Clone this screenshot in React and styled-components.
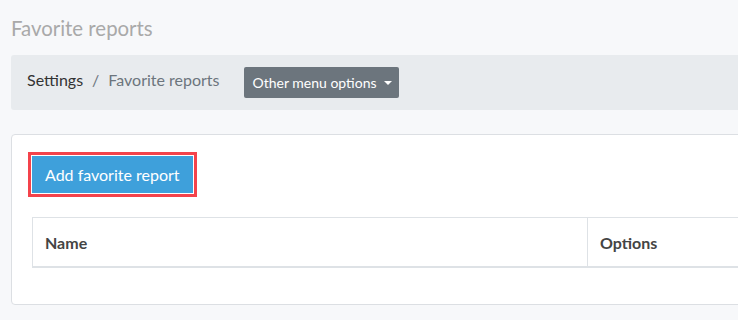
import React from 'react';
import styled, { createGlobalStyle } from 'styled-components';

const GlobalStyle = createGlobalStyle`
  body {
    margin: 0;
    background: #f7f8fa;
    font-family: Lato, "Open Sans", sans-serif;
    overflow: hidden;
  }
`;

const Page = styled.div`
  width: 1180px;
  padding: 0 0 0 11px;
`;

const Title = styled.h1`
  margin: 0;
  padding-top: 16px;
  height: 39px;
  font-size: 20.4px;
  font-weight: 400;
  line-height: 24px;
  color: #a9a9a9;
`;

const Breadcrumbs = styled.div`
  display: flex;
  align-items: center;
  height: 55px;
  padding: 0 16px;
  background: #e8ebee;
  border-radius: 3px;
`;

const Trail = styled.ol`
  display: flex;
  margin: 0 24px 6px 0;
  padding: 0;
  list-style: none;
  font-size: 16px;

  li + li::before {
    content: '/';
    padding: 0 9px;
    color: #6c757d;
  }
`;

const Crumb = styled.li`
  color: ${p => (p.$active ? '#6c757d' : '#333')};
`;

const MenuButton = styled.button`
  display: flex;
  align-items: center;
  gap: 7px;
  height: 31px;
  padding: 0 7px 0 9px;
  border: none;
  border-radius: 2px;
  background: #6c757d;
  color: #fff;
  font-family: inherit;
  font-size: 14px;
`;

const Caret = styled.span`
  width: 0;
  height: 0;
  border-left: 4px solid transparent;
  border-right: 4px solid transparent;
  border-top: 4px solid #fff;
  margin-top: 1px;
`;

const Card = styled.div`
  margin-top: 24px;
  padding: 21px 20px 36px;
  background: #fff;
  border: 1px solid #dcdfe3;
  border-radius: 4px;
`;

const AddButton = styled.button`
  display: block;
  height: 37px;
  padding: 0 13px;
  border: none;
  background: #3ea0db;
  color: #fff;
  font-family: inherit;
  font-size: 16px;
  box-shadow: 0 0 0 1px #fff, 0 0 0 4px #f4434b;
`;

const Table = styled.table`
  width: 100%;
  margin-top: 24px;
  border-collapse: collapse;
`;

const HeadCell = styled.th`
  width: ${p => p.$width || 'auto'};
  height: 48px;
  padding: 0 12px;
  text-align: left;
  font-size: 16px;
  font-weight: 700;
  color: #444;
  border: 1px solid #dee2e6;
  border-bottom: 2px solid #dee2e6;
`;

export default function App() {
  return (
    <Page>
      <GlobalStyle />
      <Title>Favorite reports</Title>
      <Breadcrumbs>
        <Trail>
          <Crumb>Settings</Crumb>
          <Crumb $active>Favorite reports</Crumb>
        </Trail>
        <MenuButton>
          Other menu options
          <Caret />
        </MenuButton>
      </Breadcrumbs>
      <Card>
        <AddButton>Add favorite report</AddButton>
        <Table>
          <thead>
            <tr>
              <HeadCell $width="530px">Name</HeadCell>
              <HeadCell>Options</HeadCell>
            </tr>
          </thead>
        </Table>
      </Card>
    </Page>
  );
}
